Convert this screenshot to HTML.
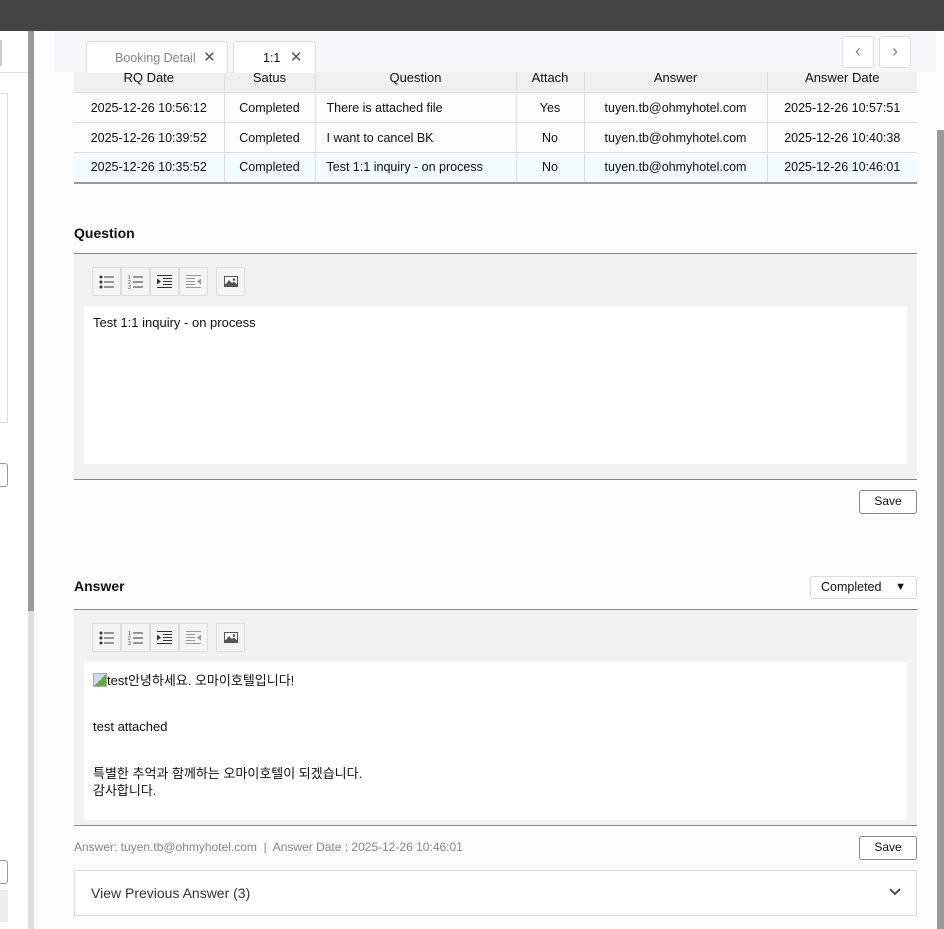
<!DOCTYPE html>
<html><head><meta charset="utf-8"><style>
*{box-sizing:border-box;margin:0;padding:0}
body{width:944px;height:929px;overflow:hidden;background:#fff;font-family:"Liberation Sans","Noto Sans CJK KR",sans-serif;position:relative;color:#111}
.a{position:absolute}
table{border-collapse:collapse;position:absolute;left:74px;top:61px;width:843px;font-size:12.5px}
td,th{border:1px solid #ddd;text-align:center;height:30px;font-weight:normal;padding:0}
th{background:#f0f0f0;height:31px;font-size:13px;padding-top:0}
tr:last-child td{border-bottom:2px solid #999;background:#f3fbff}
td:first-child,th:first-child{border-left:none}td:last-child,th:last-child{border-right:none}
.ed{position:absolute;left:74px;width:843px;background:#f2f2f2;border-top:1px solid #888;border-bottom:1px solid #888}
.tb{position:absolute;top:13px;left:18px;display:flex}
.b{width:29px;height:29px;border:1px solid #ddd;background:#f4f4f4;display:flex;align-items:center;justify-content:center}
.cont{position:absolute;left:10px;right:10px;background:#fff;font-size:13px;padding:8px 9px;line-height:1.35}
.btn{position:absolute;border:1px solid #888;border-radius:3px;background:#fff;font-size:12px;text-align:center;line-height:21px}
.lbl{font-size:14px;font-weight:bold;color:#111}
</style></head><body>
<div class="a" style="left:0;top:0;width:944px;height:31px;background:#444"></div>
<div class="a" style="left:28px;top:31px;width:6px;height:898px;background:#ddd"></div>
<div class="a" style="left:28px;top:31px;width:6px;height:580px;background:#999"></div>
<div class="a" style="left:0;top:31px;width:28px;height:898px;background:#fff"></div>
<div class="a" style="left:0;top:40px;width:2px;height:26px;border:1px solid #ccc"></div>
<div class="a" style="left:0;top:72px;width:28px;height:1px;background:#ddd"></div>
<div class="a" style="left:0;top:93px;width:8px;height:330px;border:1px solid #ddd;border-left:none"></div>
<div class="a" style="left:0;top:463px;width:8px;height:24px;border:1px solid #999;border-left:none;border-radius:0 3px 3px 0"></div>
<div class="a" style="left:0;top:860px;width:8px;height:24px;border:1px solid #999;border-left:none;border-radius:0 3px 3px 0"></div>
<div class="a" style="left:0;top:890px;width:8px;height:32px;background:#eee"></div>
<div class="a" style="left:34px;top:31px;width:903px;height:898px;background:#fcfcfc"></div>
<div class="a" style="left:937px;top:31px;width:7px;height:898px;background:#fff"></div>
<div class="a" style="left:937px;top:130px;width:7px;height:799px;background:#999"></div>

<table>
<tr><th style="width:150px">RQ Date</th><th style="width:91px">Satus</th><th style="width:201px">Question</th><th style="width:68px">Attach</th><th style="width:183px">Answer</th><th>Answer Date</th></tr>
<tr><td>2025-12-26 10:56:12</td><td>Completed</td><td style="text-align:left;padding-left:11px">There is attached file</td><td>Yes</td><td>tuyen.tb@ohmyhotel.com</td><td>2025-12-26 10:57:51</td></tr>
<tr><td>2025-12-26 10:39:52</td><td>Completed</td><td style="text-align:left;padding-left:11px">I want to cancel BK</td><td>No</td><td>tuyen.tb@ohmyhotel.com</td><td>2025-12-26 10:40:38</td></tr>
<tr><td>2025-12-26 10:35:52</td><td>Completed</td><td style="text-align:left;padding-left:11px">Test 1:1 inquiry - on process</td><td>No</td><td>tuyen.tb@ohmyhotel.com</td><td>2025-12-26 10:46:01</td></tr>
</table>
<div class="a" style="left:54px;top:31px;width:883px;height:41px;background:#f7f7f9"></div>
<div class="a" style="left:86px;top:41px;width:142px;height:32px;background:#fff;border:1px solid #ddd;border-bottom:none;border-radius:3px 3px 0 0;font-size:12.5px;color:#888;padding:6px 0 0 28px">Booking Detail <span style="color:#555;font-size:15px;margin-left:4px">✕</span></div>
<div class="a" style="left:233px;top:41px;width:83px;height:32px;background:#fff;border:1px solid #ddd;border-bottom:none;border-radius:3px 3px 0 0;font-size:12.5px;color:#111;padding:6px 0 0 29px">1:1 <span style="color:#555;font-size:15px;margin-left:6px">✕</span></div>
<div class="a" style="left:842px;top:36px;width:32px;height:32px;background:#fff;border:1px solid #ddd;border-radius:3px;text-align:center;line-height:28px;color:#888;font-size:18px">‹</div>
<div class="a" style="left:879px;top:36px;width:32px;height:32px;background:#fff;border:1px solid #ddd;border-radius:3px;text-align:center;line-height:28px;color:#888;font-size:18px">›</div>

<svg width="0" height="0" style="position:absolute"><defs>
<g id="ul"><circle cx="2" cy="2" r="1.5"/><circle cx="2" cy="7" r="1.5"/><circle cx="2" cy="12" r="1.5"/><rect x="5" y="1.5" width="10" height="1"/><rect x="5" y="6.5" width="10" height="1"/><rect x="5" y="11.5" width="10" height="1"/></g>
<g id="ol"><text x="0" y="4" font-size="5" font-family="Liberation Sans">1</text><text x="0" y="9" font-size="5" font-family="Liberation Sans">2</text><text x="0" y="14" font-size="5" font-family="Liberation Sans">3</text><rect x="5" y="1.5" width="10" height="1"/><rect x="5" y="6.5" width="10" height="1"/><rect x="5" y="11.5" width="10" height="1"/></g>
<g id="in"><rect x="0" y="0" width="15" height="1"/><rect x="6" y="3" width="9" height="1"/><rect x="6" y="6" width="9" height="1"/><rect x="6" y="9" width="9" height="1"/><rect x="0" y="12" width="15" height="1"/><path d="M0 3.5 L4 6.5 L0 9.5Z"/></g>
<g id="img"><rect x="0" y="0" width="14" height="11" fill="#555"/><rect x="1" y="1" width="12" height="7" fill="#fff"/><circle cx="10" cy="3.5" r="1.3" fill="#555"/><path d="M1 9 L5 4 L8 7 L10 5.5 L13 8.5 L13 10 L1 10Z" fill="#555"/></g>
</defs></svg>

<div class="a lbl" style="left:74px;top:225px">Question</div>
<div class="ed" style="top:253px;height:227px">
<div class="tb">
<div class="b"><svg width="15" height="14" fill="#333"><use href="#ul"/></svg></div><div class="b"><svg width="15" height="14" fill="#333"><use href="#ol"/></svg></div><div class="b"><svg width="15" height="13" fill="#333"><use href="#in"/></svg></div><div class="b"><svg width="15" height="13" fill="#999"><use href="#in" transform="translate(15,0) scale(-1,1)"/></svg></div>
<div class="b" style="margin-left:8px"><svg width="14" height="11"><use href="#img"/></svg></div></div>
<div class="cont" style="top:52px;height:158px">Test 1:1 inquiry - on process</div>
</div>
<div class="btn" style="left:859px;top:490px;width:58px;height:24px">Save</div>

<div class="a lbl" style="left:74px;top:578px">Answer</div>
<div class="a" style="left:810px;top:576px;width:107px;height:23px;border:1px solid #ddd;border-radius:3px;background:#fff;font-size:12.5px;padding:3px 0 0 10px">Completed<span style="position:absolute;right:10px;top:4px;font-size:11px">▼</span></div>
<div class="ed" style="top:609px;height:217px">
<div class="tb">
<div class="b"><svg width="15" height="14" fill="#333"><use href="#ul"/></svg></div><div class="b"><svg width="15" height="14" fill="#333"><use href="#ol"/></svg></div><div class="b"><svg width="15" height="13" fill="#333"><use href="#in"/></svg></div><div class="b"><svg width="15" height="13" fill="#999"><use href="#in" transform="translate(15,0) scale(-1,1)"/></svg></div>
<div class="b" style="margin-left:8px"><svg width="14" height="11"><use href="#img"/></svg></div></div>
<div class="cont" style="top:52px;height:158px;padding-top:10px;line-height:17px">
<div><span style="display:inline-block;width:14px;height:14px;border:1px solid #aaa;background:linear-gradient(135deg,#cde 50%,#6a4 50%);vertical-align:-2px"></span>test안녕하세요. 오마이호텔입니다!</div>
<div style="margin-top:29px">test attached</div>
<div style="margin-top:30px">특별한 추억과 함께하는 오마이호텔이 되겠습니다.</div>
<div>감사합니다.</div>
</div>
</div>
<div class="a" style="left:74px;top:840px;font-size:12px;color:#888">Answer: tuyen.tb@ohmyhotel.com &nbsp;|&nbsp; Answer Date : 2025-12-26 10:46:01</div>
<div class="btn" style="left:859px;top:836px;width:58px;height:24px">Save</div>
<div class="a" style="left:74px;top:870px;width:843px;height:46px;border:1px solid #ddd;background:#fff;font-size:14px;color:#333;padding:14px 0 0 16px">View Previous Answer (3)
<svg class="a" style="right:15px;top:17px" width="12" height="8"><path d="M1 1 L6 6 L11 1" fill="none" stroke="#444" stroke-width="1.8"/></svg></div>
</body></html>
